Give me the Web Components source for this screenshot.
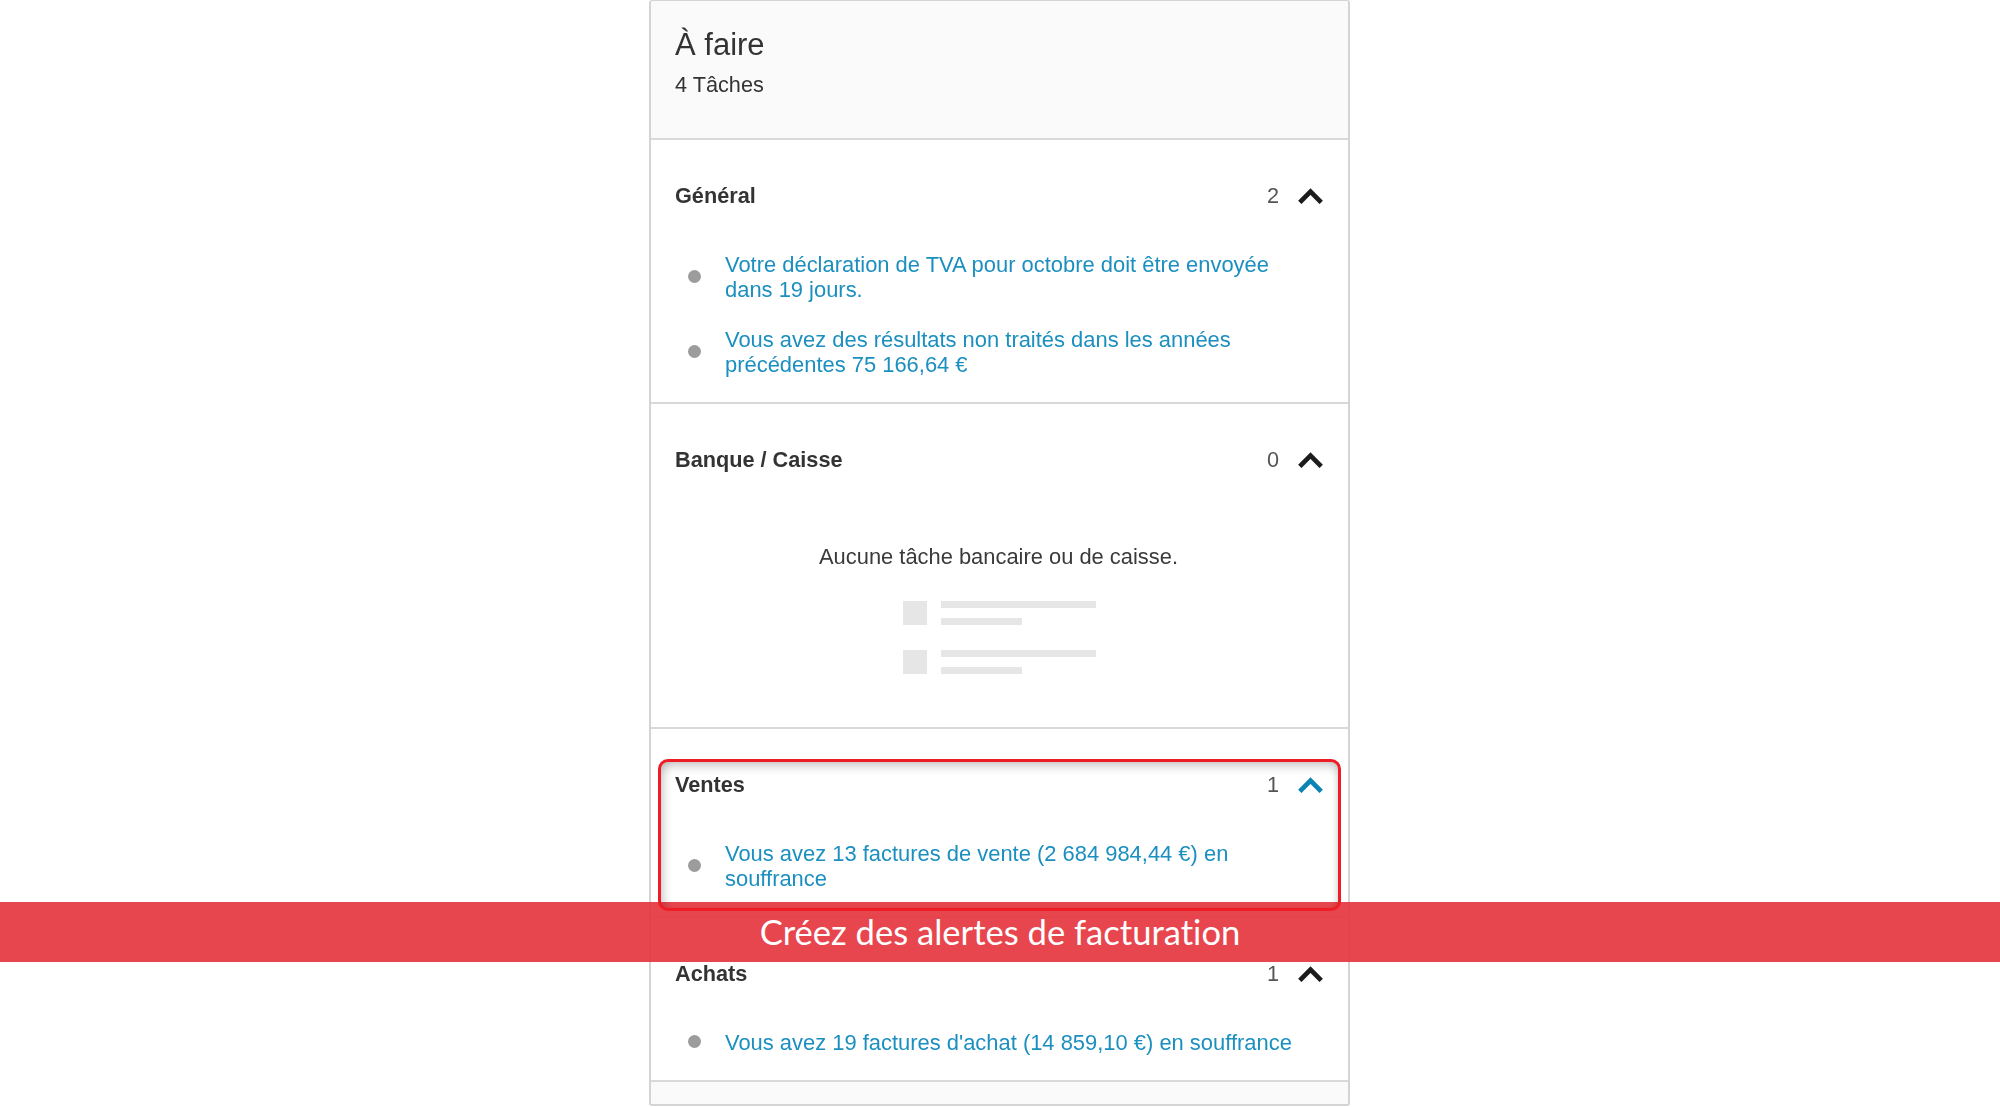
<!DOCTYPE html>
<html lang="fr">
<head>
<meta charset="utf-8">
<title>À faire</title>
<style>
  html, body { margin: 0; background: #fff; overflow: hidden; }
  body { font-family: "Liberation Sans", Arial, sans-serif; color: #333; }
</style>
</head>
<body>
<todo-screen>
  <todo-panel>
    <todo-head heading="À faire" sub="4 Tâches"></todo-head>
    <todo-section heading="Général" count="2">
      <todo-item>Votre déclaration de TVA pour octobre doit être envoyée dans 19 jours.</todo-item>
      <todo-item>Vous avez des résultats non traités dans les années précédentes 75 166,64 €</todo-item>
    </todo-section>
    <todo-section heading="Banque / Caisse" count="0">
      <todo-empty>Aucune tâche bancaire ou de caisse.</todo-empty>
    </todo-section>
    <todo-section heading="Ventes" count="1" active>
      <todo-item>Vous avez 13 factures de vente (2 684 984,44 €) en souffrance</todo-item>
    </todo-section>
    <todo-section heading="Achats" count="1">
      <todo-item>Vous avez 19 factures d'achat (14 859,10 €) en souffrance</todo-item>
    </todo-section>
    <todo-foot></todo-foot>
  </todo-panel>
  <red-banner>Créez des alertes de facturation</red-banner>
  <red-outline></red-outline>
</todo-screen>

<script>
const shadow = (el, html) => {
  el.attachShadow({ mode: "open" })
  el.shadowRoot.innerHTML = html
}

class TodoScreen extends HTMLElement {
  constructor() {
    super()
    shadow(this, `
      <style>
        :host { display: flex; box-sizing: border-box; padding-left: 649px; position: relative; width: 2000px; height: 1107px; overflow: hidden; }
      </style>
      <slot></slot>`)
  }
}

class TodoPanel extends HTMLElement {
  constructor() {
    super()
    shadow(this, `
      <style>
        :host {
          display: block; box-sizing: border-box; width: 701px; height: 1106px;
          border: 2px solid #d4d4d4; border-top-width: 1px; border-radius: 3px;
          background: #fff; overflow: hidden; filter: blur(.35px);
        }
      </style>
      <slot></slot>`)
  }
}

class TodoHead extends HTMLElement {
  constructor() {
    super()
    shadow(this, `
      <style>
        :host { display: block; box-sizing: border-box; height: 139px; padding: 24px 24px 0; background: #fafafa; border-bottom: 2px solid #d9d9d9; }
        h1 { margin: 0; font: 400 31px/40px "Liberation Sans", Arial, sans-serif; color: #333; }
        p { margin: 0; font: 400 21.7px/40px "Liberation Sans", Arial, sans-serif; color: #333; }
      </style>
      <h1>${this.getAttribute("heading")}</h1>
      <p>${this.getAttribute("sub")}</p>`)
  }
}

class TodoSection extends HTMLElement {
  constructor() {
    super()
    const color = this.hasAttribute("active") ? "#0a84b4" : "#1c1c1c"
    shadow(this, `
      <style>
        :host { display: block; padding: 40px 24px 25px; border-bottom: 2px solid #d9d9d9; }
        header { display: flex; align-items: center; height: 32px; margin-bottom: 40px; }
        h2 { flex: 1; margin: 0; font: 700 21.7px/32px "Liberation Sans", Arial, sans-serif; color: #333; }
        span { font: 400 21.7px/32px "Liberation Sans", Arial, sans-serif; color: #555; margin-right: 19px; }
        svg { display: block; margin: 0 1px 0 0; }
        .body { display: flex; flex-direction: column; gap: 25px; }
      </style>
      <header>
        <h2>${this.getAttribute("heading")}</h2>
        <span>${this.getAttribute("count")}</span>
        <svg width="25" height="16" viewBox="0 0 25 16" fill="none" stroke="${color}" stroke-width="4.7"><path d="M1.8 14.4 12.5 3.6l10.7 10.8"/></svg>
      </header>
      <div class="body"><slot></slot></div>`)
  }
}

class TodoItem extends HTMLElement {
  constructor() {
    super()
    shadow(this, `
      <style>
        :host { display: flex; align-items: center; padding-left: 13px; }
        i { flex: none; width: 13px; height: 13px; border-radius: 50%; background: #9c9c9c; margin: 0 24px 1px 0; }
        a { flex: 1; padding-right: 24px; font: 400 21.93px/25px "Liberation Sans", Arial, sans-serif; color: #1b8fbf; text-decoration: none; }
      </style>
      <i></i><a href="#"><slot></slot></a>`)
  }
}

class TodoEmpty extends HTMLElement {
  constructor() {
    super()
    shadow(this, `
      <style>
        :host { display: flex; flex-direction: column; align-items: center; margin-top: 28px; padding-bottom: 28px; }
        p { margin: 0 2px 31.5px 0; font: 400 21.9px/25px "Liberation Sans", Arial, sans-serif; color: #3a3a3a; }
        .row { display: grid; grid-template-columns: 24px 155px; column-gap: 14px; margin-bottom: 25px; }
        .row:last-child { margin-bottom: 0; }
        .sq { height: 24px; background: #e6e6e6; }
        .lines { display: flex; flex-direction: column; justify-content: space-between; }
        .lines b { display: block; height: 7px; background: #e6e6e6; }
        .lines b + b { width: 81px; }
      </style>
      <p><slot></slot></p>
      <div class="row"><div class="sq"></div><div class="lines"><b></b><b></b></div></div>
      <div class="row"><div class="sq"></div><div class="lines"><b></b><b></b></div></div>`)
  }
}

class TodoFoot extends HTMLElement {
  constructor() {
    super()
    shadow(this, `
      <style>:host { display: block; height: 30px; background: #fafafa; }</style>`)
  }
}

// the two annotations lie over the panel, the outline shows on top of the banner
class RedOutline extends HTMLElement {
  constructor() {
    super()
    shadow(this, `
      <style>
        :host {
          position: absolute; left: 658px; top: 759px; width: 683px; height: 151.5px; box-sizing: border-box;
          border: 3px solid #ee1c25; border-radius: 10px;
          box-shadow: inset 0 8px 10px -3px rgba(0,0,0,.18), inset 8px 0 9px -4px rgba(0,0,0,.14), inset -5px 0 7px -4px rgba(0,0,0,.12);
        }
      </style>`)
  }
}

class RedBanner extends HTMLElement {
  constructor() {
    super()
    shadow(this, `
      <style>
        :host {
          position: absolute; left: 0; right: 0; top: 902px; height: 60px;
          display: flex; align-items: center; justify-content: center;
          background: rgba(230, 56, 65, .93);
          font: 400 34.6px/60px Lato, "Open Sans", sans-serif; font-variant-ligatures: none; color: #fff;
        }
      </style>
      <slot></slot>`)
  }
}

customElements.define("todo-screen", TodoScreen)
customElements.define("todo-panel", TodoPanel)
customElements.define("todo-head", TodoHead)
customElements.define("todo-section", TodoSection)
customElements.define("todo-item", TodoItem)
customElements.define("todo-empty", TodoEmpty)
customElements.define("todo-foot", TodoFoot)
customElements.define("red-outline", RedOutline)
customElements.define("red-banner", RedBanner)
</script>
</body>
</html>
